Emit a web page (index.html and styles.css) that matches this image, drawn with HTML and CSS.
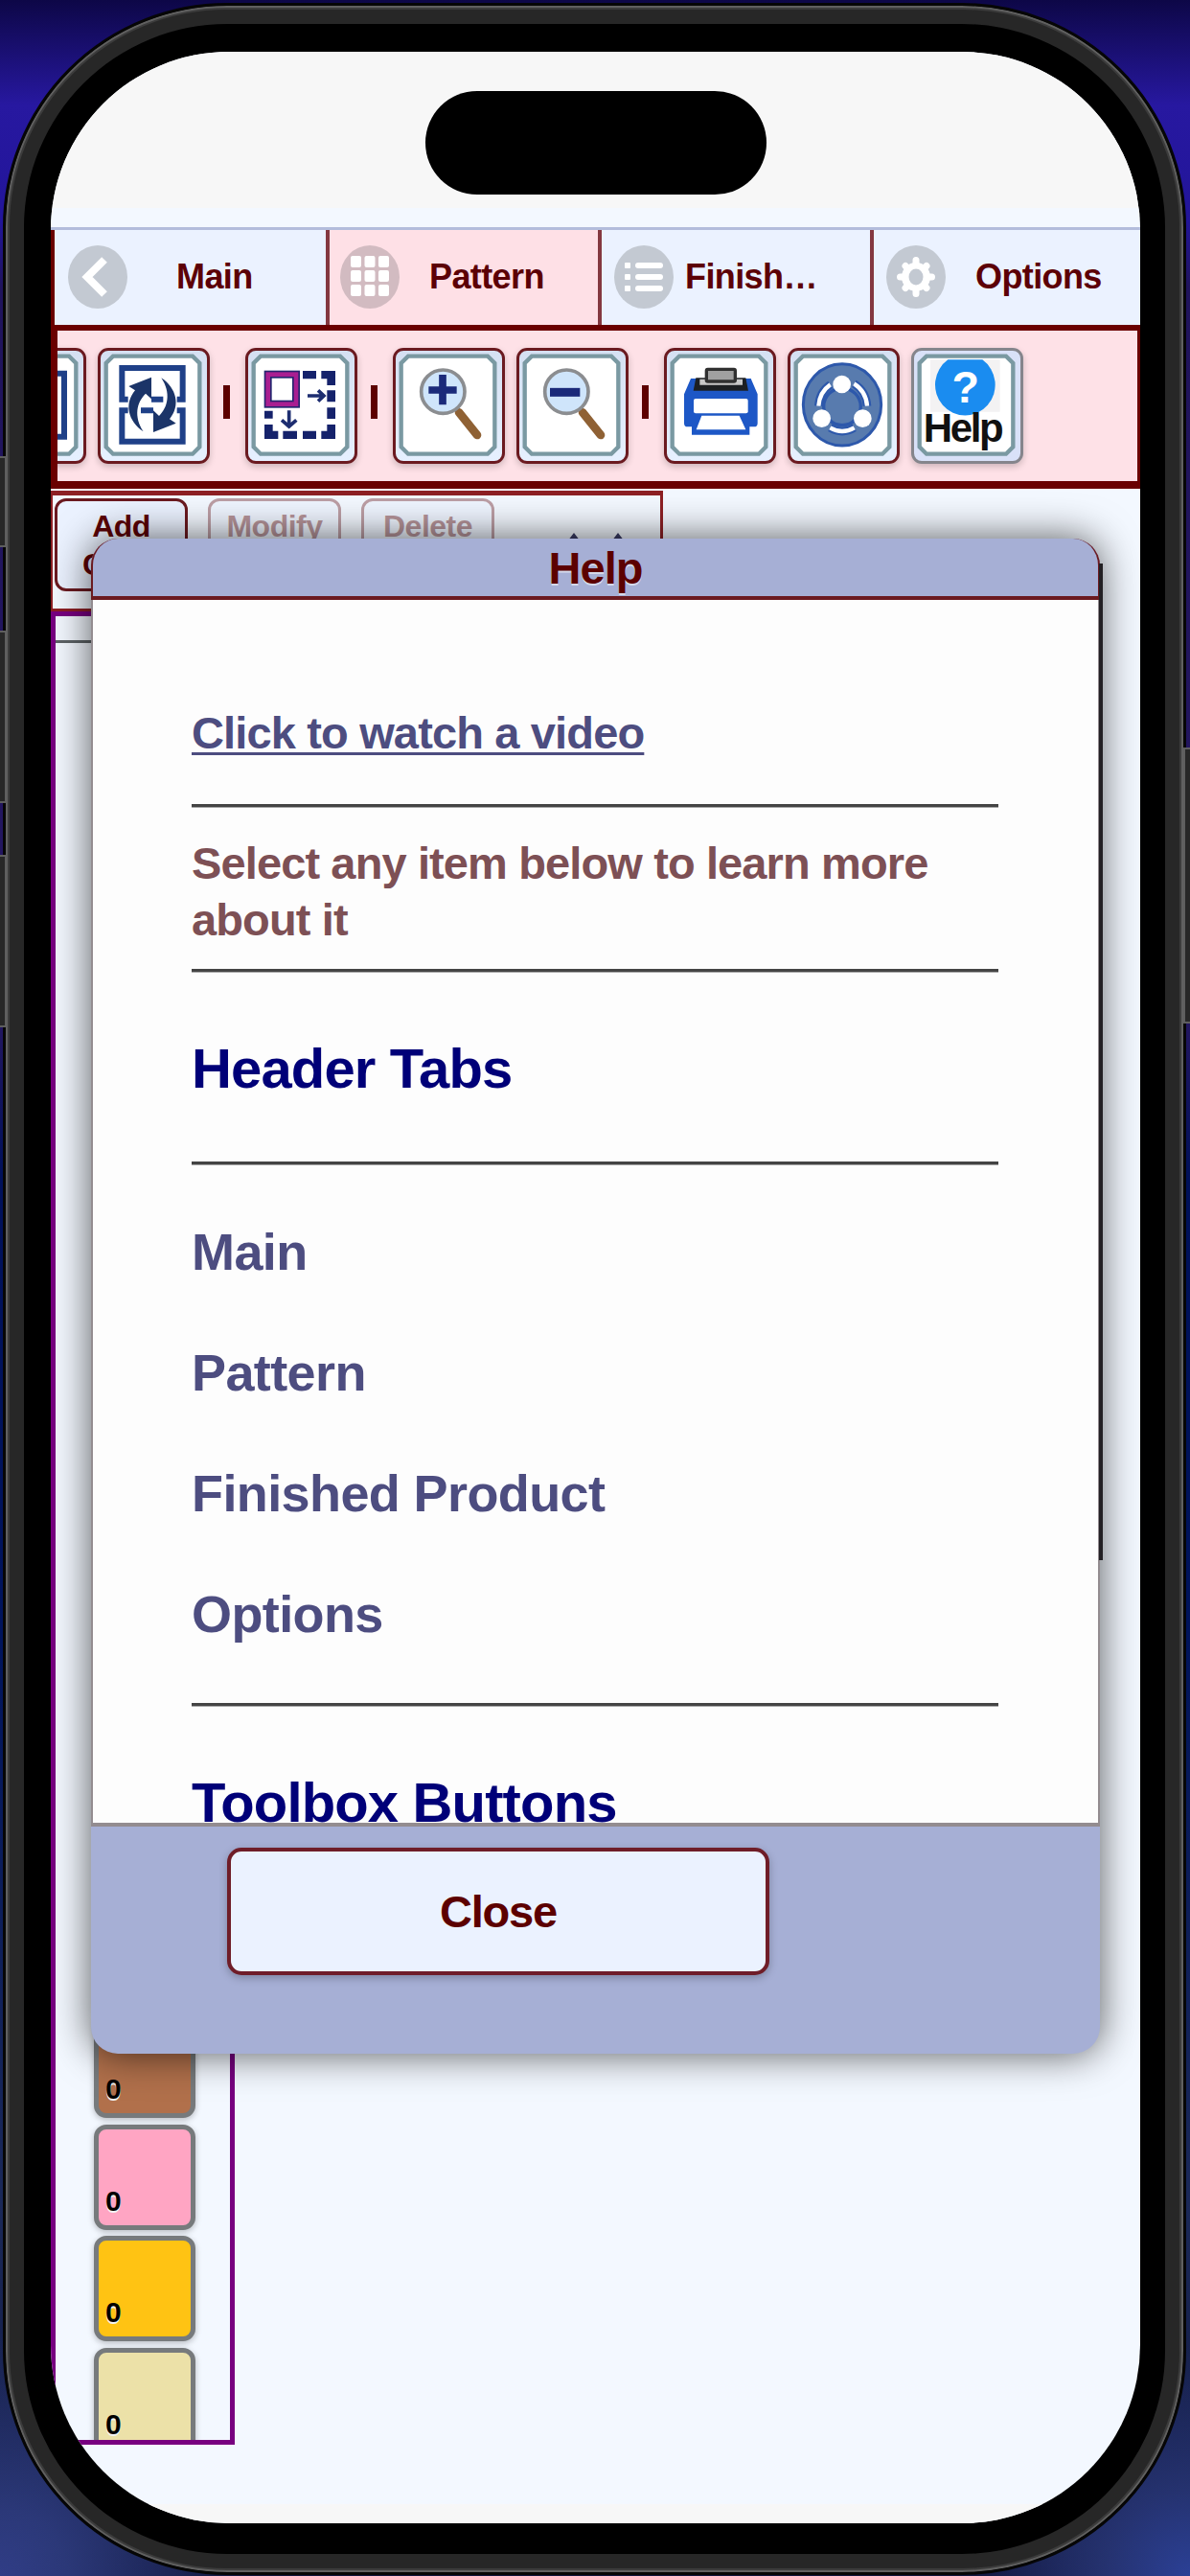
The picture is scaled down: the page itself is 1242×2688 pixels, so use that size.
FILE: index.html
```html
<!DOCTYPE html>
<html lang="en">
<head>
    <meta charset="UTF-8">
    <meta name="viewport" content="width=device-width, initial-scale=1.0">
    <title>Pattern Help</title>
    <link rel="stylesheet" href="styles.css">
</head>
<body>
    <!-- Hardware buttons -->
    <div class="side-btn action"></div>
    <div class="side-btn volume-up"></div>
    <div class="side-btn volume-down"></div>
    <div class="side-btn power"></div>

    <div class="device">
        <div class="screen">
            <div class="status-bar"><div class="island"></div></div>

            <div class="tabs">
                <div class="tab tab-main">
                    <svg class="tab-icon" viewBox="0 0 62 66">
                        <ellipse cx="31" cy="33" rx="31" ry="33" fill="#c3c9d2"/>
                        <path d="M38 15L20 33L38 51" fill="none" stroke="#fff" stroke-width="8"/>
                    </svg>
                    <span>Main</span>
                </div>
                <div class="tab tab-pattern active">
                    <svg class="tab-icon" viewBox="0 0 62 66">
                        <ellipse cx="31" cy="33" rx="31" ry="33" fill="#d2bbc1"/>
                        <g fill="#fff">
                            <rect x="11" y="11" width="11" height="12" rx="2"/><rect x="25.500" y="11" width="11" height="12" rx="2"/><rect x="40" y="11" width="11" height="12" rx="2"/>
                            <rect x="11" y="26" width="11" height="12" rx="2"/><rect x="25.500" y="26" width="11" height="12" rx="2"/><rect x="40" y="26" width="11" height="12" rx="2"/>
                            <rect x="11" y="41" width="11" height="12" rx="2"/><rect x="25.500" y="41" width="11" height="12" rx="2"/><rect x="40" y="41" width="11" height="12" rx="2"/>
                        </g>
                    </svg>
                    <span>Pattern</span>
                </div>
                <div class="tab tab-finish">
                    <svg class="tab-icon" viewBox="0 0 62 66">
                        <ellipse cx="31" cy="33" rx="31" ry="33" fill="#c3c9d2"/>
                        <g fill="#fff">
                            <rect x="11" y="18" width="6" height="6" rx="1"/><rect x="22" y="18" width="29" height="6" rx="3"/>
                            <rect x="11" y="30" width="6" height="6" rx="1"/><rect x="22" y="30" width="29" height="6" rx="3"/>
                            <rect x="11" y="42" width="6" height="6" rx="1"/><rect x="22" y="42" width="29" height="6" rx="3"/>
                        </g>
                    </svg>
                    <span>Finish…</span>
                </div>
                <div class="tab tab-options">
                    <svg class="tab-icon" viewBox="0 0 62 66">
                        <ellipse cx="31" cy="33" rx="31" ry="33" fill="#c3c9d2"/>
                        <g stroke="#fff" stroke-width="7" stroke-linecap="round">
                            <path d="M31 15.500V50.500M14.500 33H47.500M20 21.500L42 44.500M42 21.500L20 44.500"/>
                        </g>
                        <circle cx="31" cy="33" r="15" fill="#fff"/>
                        <ellipse cx="31" cy="33" rx="7.500" ry="8.500" fill="#c3c9d2"/>
                    </svg>
                    <span>Options</span>
                </div>
            </div>

            <div class="toolbar">
                <button class="tool">
                    <svg viewBox="0 0 351 363">
                        <path class="frame" d="M48 26H297L319 48V310L297 332H48L26 310V48Z"/>
                        <path d="M80 80H282V278H80Z" fill="none" stroke="#1f4088" stroke-width="18"/>
                    </svg>
                </button>
                <button class="tool">
                    <svg viewBox="0 0 351 363">
                        <path class="frame" d="M48 26H297L319 48V310L297 332H48L26 310V48Z"/>
                        <g fill="none" stroke="#1f4088" stroke-width="18">
                            <path d="M95 161H76V63H266V161H248"/>
                            <path d="M95 196H76V293H266V196H248"/>
                            <path d="M168 161H205M135 196H174"/>
                        </g>
                        <g fill="#1b3468">
                            <path id="swirl" d="M97 120L168 92V160L150 143C122 170 112 215 143 262C95 230 82 175 117 133Z"/>
                            <use href="#swirl" transform="rotate(180 171 178)"/>
                        </g>
                    </svg>
                </button>
                <span class="sep"></span>
                <button class="tool">
                    <svg viewBox="0 0 351 363">
                        <path class="frame" d="M48 26H297L319 48V310L297 332H48L26 310V48Z"/>
                        <rect x="71" y="83" width="88" height="93" fill="none" stroke="#25246f" stroke-width="24"/>
                        <rect x="71" y="83" width="88" height="93" fill="none" stroke="#a91e91" stroke-width="14"/>
                        <g fill="#15226b">
                            <path d="M180 72h42v25h-42zM238 72h44v45h-26v-20h-18zM256 133h26v36h-26zM256 187h26v35h-26zM282 240v45h-44v-25h18v-20zM180 260h42v25h-42zM118 260h44v25h-44zM60 240h26v20h17v25h-43zM60 197h26v24h-26z"/>
                        </g>
                        <path d="M195 150H243M228 133L246 150L228 167M137 196V244M114 226L137 246L160 226" fill="none" stroke="#1d2d70" stroke-width="11"/>
                    </svg>
                </button>
                <span class="sep"></span>
                <button class="tool">
                    <svg viewBox="0 0 351 363">
                        <path class="frame" d="M48 26H297L319 48V310L297 332H48L26 310V48Z"/>
                        <path d="M207 202L264 273" stroke="#8f6134" stroke-width="26" stroke-linecap="round"/>
                        <circle cx="157" cy="137" r="68" fill="#cfe5fb" stroke="#8b8d90" stroke-width="11"/>
                        <path d="M112 132H200M156 84V178" stroke="#1b2a7a" stroke-width="23"/>
                    </svg>
                </button>
                <button class="tool">
                    <svg viewBox="0 0 351 363">
                        <path class="frame" d="M48 26H297L319 48V310L297 332H48L26 310V48Z"/>
                        <path d="M207 202L264 273" stroke="#8f6134" stroke-width="26" stroke-linecap="round"/>
                        <circle cx="157" cy="137" r="68" fill="#cfe5fb" stroke="#8b8d90" stroke-width="11"/>
                        <path d="M105 139H199" stroke="#1b2a7a" stroke-width="27"/>
                    </svg>
                </button>
                <span class="sep"></span>
                <button class="tool">
                    <svg viewBox="0 0 351 363">
                        <path class="frame" d="M48 26H297L319 48V310L297 332H48L26 310V48Z"/>
                        <path d="M84 96H272L293 145V236Q293 247 282 247H268V272H87V247H74Q63 247 63 236V145Z" fill="#1d57c6"/>
                        <path d="M100 94H256L264 134H92Z" fill="#1c1f22"/>
                        <path d="M112 98H246V116H112Z" fill="#c8c8c8"/>
                        <rect x="133" y="67" width="90" height="38" rx="4" fill="#a0a0a0" stroke="#303030" stroke-width="10"/>
                        <rect x="93" y="159" width="170" height="46" rx="6" fill="#fff"/>
                        <path d="M118 212H236L256 256H101Z" fill="#fff"/>
                    </svg>
                </button>
                <button class="tool">
                    <svg viewBox="0 0 351 363">
                        <path class="frame" d="M48 26H297L319 48V310L297 332H48L26 310V48Z"/>
                        <ellipse cx="171" cy="178" rx="122" ry="128" fill="#587bae" stroke="#2d58ab" stroke-width="9"/>
                        <circle cx="171" cy="184" r="58" fill="none" stroke="#2d58ab" stroke-width="10"/>
                        <path d="M134 115Q100 138 97 182M208 112Q246 136 249 182M133 250Q171 272 209 250" fill="none" stroke="#2d58ab" stroke-width="26"/>
                        <path d="M134 115Q100 138 97 182M208 112Q246 136 249 182M133 250Q171 272 209 250" fill="none" stroke="#fff" stroke-width="13"/>
                        <g fill="#fff"><circle cx="170" cy="114" r="28"/><circle cx="107" cy="221" r="28"/><circle cx="235" cy="221" r="28"/></g>
                    </svg>
                </button>
                <button class="tool tool-help">
                    <svg viewBox="0 0 351 363">
                        <path class="frame" d="M48 26H297L319 48V310L297 332H48L26 310V48Z"/>
                        <path d="M60 37H278V200H60Z" fill="#f3f2f3"/>
                        <path d="M115 37H223A94 96 0 1 1 115 37Z" fill="#1a8cf0"/>
                        <text x="170" y="171" class="help-mark">?</text>
                        <text x="38" y="293" class="help-word" textLength="252">Help</text>
                    </svg>
                </button>
            </div>

            <div class="color-actions">
                <button class="action-btn">Add<br>Color</button>
                <button class="action-btn disabled">Modify<br>Color</button>
                <button class="action-btn disabled">Delete<br>Color</button>
                <svg class="arrows" viewBox="0 0 62 20"><path d="M-2 20L8 7L18 20ZM44 20L54 7L64 20Z" fill="#3b3c66"/></svg>
            </div>

            <div class="palette">
                <hr class="palette-line">
                <div class="swatch brown">0</div>
                <div class="swatch pink">0</div>
                <div class="swatch yellow">0</div>
                <div class="swatch beige">0</div>
            </div>

            <div class="home-area"></div>

            <div class="modal">
                <div class="modal-header">Help</div>
                <div class="modal-body">
                    <a class="video-link">Click to watch a video</a>
                    <hr>
                    <p class="intro">Select any item below to learn more about it</p>
                    <hr>
                    <h2>Header Tabs</h2>
                    <hr>
                    <ul class="topics">
                        <li>Main</li>
                        <li>Pattern</li>
                        <li>Finished Product</li>
                        <li>Options</li>
                    </ul>
                    <hr>
                    <h2>Toolbox Buttons</h2>
                </div>
                <div class="modal-footer">
                    <button class="close-btn">Close</button>
                </div>
                <div class="scrollbar"></div>
            </div>
        </div>
    </div>
</body>
</html>
```
FILE: styles.css
```css
* {
    box-sizing: border-box;
}

body {
    margin: 0;
    width: 1242px;
    height: 2688px;
    padding: 3px 4px 1px 3px;
    overflow: hidden;
    position: relative;
    font-family: "Liberation Sans", Arial, sans-serif;
    font-weight: bold;
    background:
        radial-gradient(circle at 0 2688px, #303d86 0, #2b3878 70px, rgba(26, 36, 82, 0) 260px),
        radial-gradient(circle at 1242px 2688px, #2b4096 0, #25326f 90px, rgba(0, 20, 92, 0) 240px),
        linear-gradient(180deg, #0d0747 0, #2718a0 110px, #22159a 230px, #20145c 300px, #241760 1060px, #00115a 1230px, #00145c 1700px, #1b2958 2300px, #10163c 2688px);
}

button {
    font: inherit;
    margin: 0;
    padding: 0;
}

/* Phone body */
.device {
    width: 1235px;
    height: 2684px;
    padding: 48px 45px 51px 47px;
    border: 3px solid #060606;
    border-radius: 234px;
    background: #000;
    box-shadow: inset 0 0 0 2px #606060, inset 0 0 0 4px #3c3c3c, inset 0 0 0 19px #272727;
}

.side-btn {
    position: absolute;
    background: #272727;
    border: 2px solid #5e5e5e;
    width: 10px;
}

.action { left: -3px; top: 476px; height: 95px; }
.volume-up { left: -3px; top: 658px; height: 180px; }
.volume-down { left: -3px; top: 892px; height: 180px; }
.power { right: -3px; top: 780px; height: 288px; }

.screen {
    position: relative;
    width: 1137px;
    height: 2579px;
    border-radius: 186px;
    overflow: hidden;
    background: #f3f8ff;
    display: flex;
    flex-direction: column;
}

.status-bar {
    flex: none;
    height: 186px;
    padding-top: 41px;
    border-bottom: 3px solid #b3bddc;
    background: linear-gradient(#f7f7f7 163px, #f3f8ff 163px);
}

.island {
    width: 356px;
    height: 108px;
    margin: 0 auto;
    border-radius: 54px;
    background: #000;
}

/* Header tabs */
.tabs {
    flex: none;
    display: flex;
    height: 99px;
    border-left: 4px solid #6a0000;
    background: #ebf2ff;
    color: #5c0006;
    font-size: 36px;
    letter-spacing: -0.6px;
}

.tab {
    width: 284px;
    flex: none;
    display: flex;
    align-items: center;
    padding: 0 0 2px 14px;
    border-left: 4px solid #843840;
}

.tab-main {
    width: 283px;
    border-left: none;
}

.tab.active {
    background: #fee0e6;
    padding-left: 11px;
}

.tab-finish { padding-left: 13px; }
.tab-options { padding-left: 13px; }

.tab-icon {
    width: 62px;
    height: 66px;
    flex: none;
}

.tab-main span { margin-left: 51px; }
.tab-pattern span { margin-left: 31px; }
.tab-finish span { margin-left: 12px; }
.tab-options span { margin-left: 31px; }

/* Toolbox */
.toolbar {
    flex: none;
    display: flex;
    align-items: flex-start;
    height: 171px;
    padding-top: 18px;
    overflow: hidden;
    border: solid #6a0000;
    border-width: 6px 3px 8px 7px;
    background: #fee1e7;
}

.tool {
    flex: none;
    width: 117px;
    height: 121px;
    margin-right: 12px;
    border: 3px solid #6b1a20;
    border-radius: 11px;
    background: linear-gradient(#d5e0f2, #e6f0ff);
    box-shadow: 0 3px 7px rgba(0, 0, 0, 0.2);
}

.tool:first-child {
    margin-left: -87px;
}

.tool svg {
    display: block;
    width: 117px;
    height: 121px;
    margin: -3px;
}

.tool-help {
    border-color: #85858c;
    background: #d9e1f8;
}

.frame {
    fill: #fff;
    stroke: #7a99a2;
    stroke-width: 13;
}

.help-mark {
    font-size: 140px;
    font-weight: bold;
    text-anchor: middle;
    fill: #fff;
}

.help-word {
    font-size: 126px;
    font-weight: bold;
    fill: #111;
}

.sep {
    flex: none;
    width: 7px;
    height: 35px;
    margin: 39px 16px 0 2px;
    background: #5c0000;
}

/* Add / modify / delete colors */
.color-actions {
    flex: none;
    display: flex;
    align-items: flex-start;
    width: 639px;
    height: 126px;
    margin-top: 2px;
    padding: 3px 0 0 2px;
    border: solid #8d2024;
    border-width: 5px 3px 3px 2px;
}

.action-btn {
    width: 139px;
    height: 97px;
    flex: none;
    margin-right: 21px;
    border: 3px solid #6b1a20;
    border-radius: 12px;
    background: #ebf2ff;
    color: #5c0006;
    font-size: 32px;
    letter-spacing: -0.5px;
    line-height: 40px;
}

.action-btn.disabled {
    opacity: 0.4;
}

.arrows {
    width: 62px;
    height: 20px;
    margin: 29px 0 0 54px;
    overflow: visible;
}

.palette {
    flex: none;
    display: flex;
    flex-direction: column;
    width: 192px;
    height: 1913px;
    overflow: hidden;
    border: 5px solid #770080;
    padding-left: 40px;
}

.palette-line {
    flex: none;
    width: 182px;
    height: 3px;
    margin: 25px 0 1429px -40px;
    border: none;
    background: #5d6366;
}

.swatch {
    flex: none;
    width: 106px;
    height: 110px;
    margin-bottom: 6.700px;
    padding: 58px 0 0 7px;
    border: 5px solid #777a7c;
    border-radius: 13px;
    box-shadow: 0 2px 6px rgba(0, 0, 0, 0.25);
    font-size: 30px;
    line-height: 34px;
    color: #000;
    text-shadow: 0 2px 0 #f3f3f3;
}

.brown { background: #b1704b; }
.pink { background: #ffa5c3; }
.yellow { background: #ffc313; }
.beige { background: #ece1a8; }

.home-area {
    margin-top: auto;
    height: 20px;
    background: #f7f7f7;
}

/* Help popup */
.modal {
    position: absolute;
    left: 42px;
    top: 508px;
    width: 1053px;
    height: 1581px;
    display: flex;
    flex-direction: column;
    border-radius: 28px;
    background: #a6afd5;
    box-shadow: 0 0 42px rgba(0, 0, 0, 0.65);
}

.modal-header {
    flex: none;
    height: 64px;
    border: solid #6b1a20;
    border-width: 0 2px 4px;
    border-radius: 28px 28px 0 0;
    color: #5c0000;
    font-size: 47px;
    letter-spacing: -1px;
    line-height: 62px;
    text-align: center;
    text-shadow: 0 2px 0 #d5d9ea;
}

.modal-body {
    flex: none;
    height: 1280px;
    overflow: hidden;
    padding: 109px 104px 0 103px;
    border: solid #938c90;
    border-width: 0 2px 4px;
    background: #fdfdfd;
}

.modal-body hr {
    height: 4px;
    margin: 44px 0 0;
    border: none;
    background: linear-gradient(#444 3px, #a5a5a5 3px);
}

.video-link {
    display: block;
    color: #4d4d80;
    font-size: 47px;
    letter-spacing: -0.850px;
    line-height: 60px;
    text-decoration: underline;
    text-decoration-thickness: 3px;
    text-underline-offset: 4px;
}

.intro {
    margin: 28px 0 0;
    color: #7d5055;
    font-size: 47px;
    letter-spacing: -0.880px;
    line-height: 59px;
}

.modal-body .intro + hr { margin-top: 22px; }

.modal-body h2 {
    margin: 65px 0 0;
    color: #000078;
    font-size: 58px;
    letter-spacing: -0.850px;
    line-height: 70px;
}

.modal-body h2 + hr { margin-top: 62px; }

.topics {
    list-style: none;
    margin: 27px 0 0;
    padding: 0;
    color: #4d4d80;
    font-size: 54px;
    letter-spacing: -0.600px;
    line-height: 126px;
}

.modal-body .topics + hr { margin-top: 30px; }

.modal-footer {
    padding: 22px 0 0 142px;
}

.close-btn {
    display: block;
    width: 566px;
    height: 133px;
    border: 4px solid #6f1d28;
    border-radius: 15px;
    background: #ebf2ff;
    box-shadow: 0 3px 8px rgba(0, 0, 0, 0.25);
    color: #5c0000;
    font-size: 47px;
    letter-spacing: -1.200px;
}

.scrollbar {
    position: absolute;
    left: 1052px;
    top: 26px;
    width: 4px;
    height: 1040px;
    background: #232024;
}
```
